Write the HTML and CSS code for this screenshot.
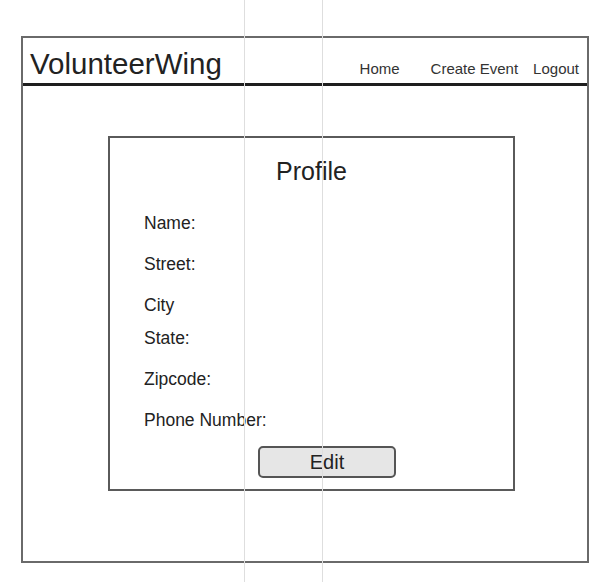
FILE: index.html
```html
<!DOCTYPE html>
<html lang="en">
<head>
  <meta charset="UTF-8">
  <meta name="viewport" content="width=device-width, initial-scale=1.0">
  <title>VolunteerWing - Profile</title>
  <link rel="stylesheet" href="styles.css">
</head>
<body>
  <div class="frame">
    <!-- Top bar -->
    <header class="topbar">
      <div class="brand">VolunteerWing</div>
      <nav class="nav">
        <a href="#" class="nav-home">Home</a>
        <a href="#">Create Event</a>
        <a href="#">Logout</a>
      </nav>
    </header>

    <!-- Profile card -->
    <main class="content">
      <section class="profile">
        <h1>Profile</h1>
        <div class="fields">
          <div class="field">Name:</div>
          <div class="field">Street:</div>
          <div class="field-group">
            <div class="field">City</div>
            <div class="field">State:</div>
          </div>
          <div class="field">Zipcode:</div>
          <div class="field">Phone Number:</div>
        </div>
        <button class="edit-btn">Edit</button>
      </section>
    </main>
  </div>

  <!-- layout guides from the mockup -->
  <div class="guide guide-a"></div>
  <div class="guide guide-b"></div>
</body>
</html>
```

FILE: styles.css
```css
body {
  font-family: "Liberation Sans", Arial, sans-serif;
  background-color: #fff;
  color: #222;
  margin: 0;
  padding: 0;
}

.frame {
  box-sizing: border-box;
  width: 568px;
  height: 527px;
  margin: 36px 0 0 21px;
  border: 2px solid #6a6a6a;
}

.topbar {
  display: flex;
  align-items: baseline;
  height: 36px;
  padding: 9px 8px 0 7px;
  border-bottom: 3px solid #1e1e1e;
}

.brand {
  font-size: 29.5px;
  margin-right: auto;
}

.nav {
  display: flex;
  gap: 15px;
}

.nav a {
  font-size: 15px;
  color: #333;
  text-decoration: none;
}

.nav .nav-home {
  margin-right: 16px;
}

.content {
  padding: 50px 0 0 85px;
}

.profile {
  box-sizing: border-box;
  width: 407px;
  height: 355px;
  border: 2px solid #5a5a5a;
  padding-top: 19px;
}

.profile h1 {
  margin: 0;
  font-size: 25px;
  font-weight: normal;
  line-height: 29px;
  text-align: center;
}

.fields {
  display: flex;
  flex-direction: column;
  gap: 21px;
  margin-top: 27px;
  padding-left: 34px;
}

.field-group {
  display: flex;
  flex-direction: column;
  gap: 13px;
}

.field {
  font-size: 17.5px;
  line-height: 20px;
}

.edit-btn {
  display: block;
  box-sizing: border-box;
  width: 138px;
  height: 32px;
  margin: 16px 0 0 148px;
  padding: 0;
  font-family: "Liberation Sans", Arial, sans-serif;
  font-size: 20px;
  color: #222;
  background-color: #e6e6e6;
  border: 2px solid #555;
  border-radius: 5px;
}

.guide {
  position: absolute;
  top: 0;
  width: 1px;
  height: 582px;
  background-color: #dedede;
  pointer-events: none;
}

.guide-a {
  left: 244px;
}

.guide-b {
  left: 322px;
}
```
